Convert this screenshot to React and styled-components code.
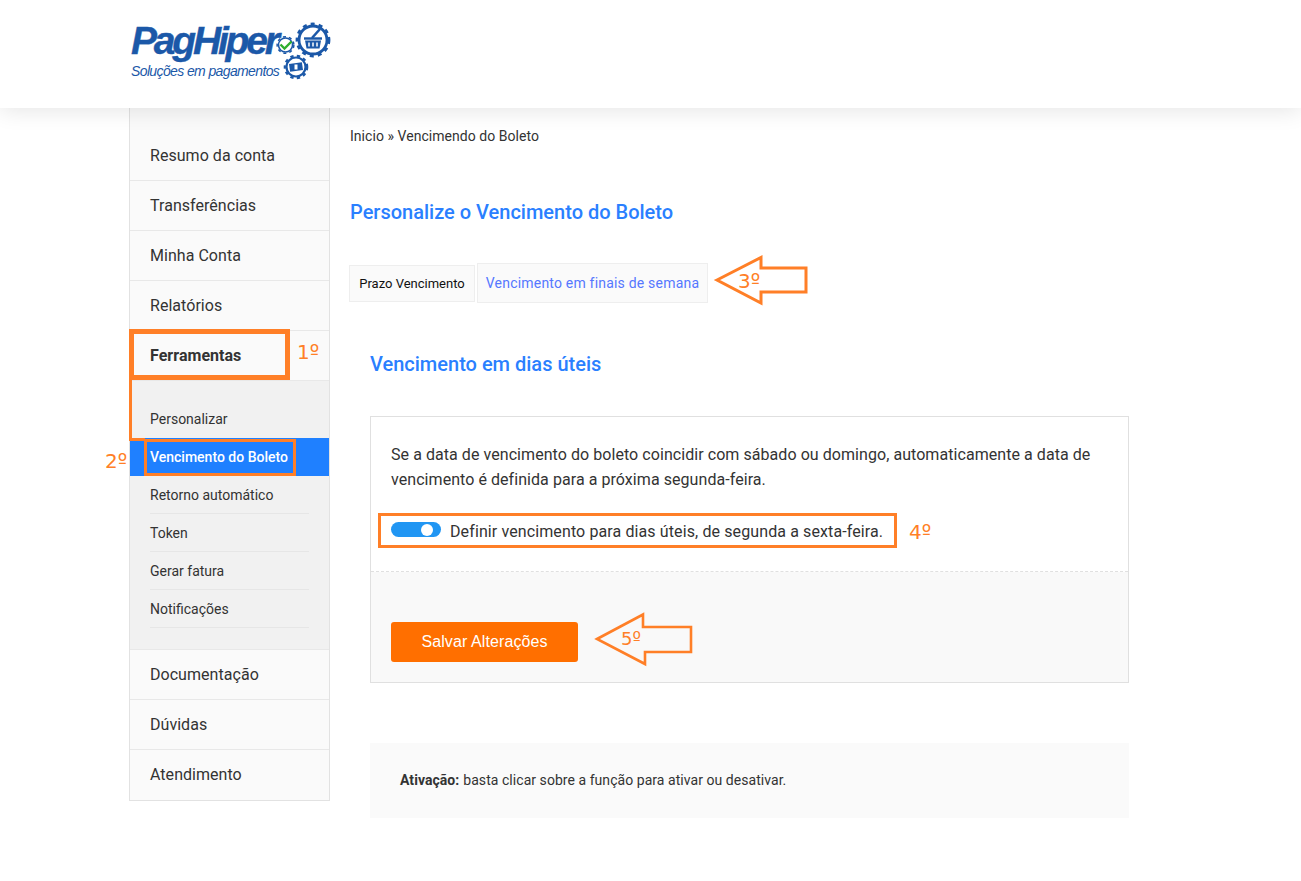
import React from "react";
import styled, { createGlobalStyle } from "styled-components";

const Global = createGlobalStyle`
  html, body { margin: 0; padding: 0; background: #fff; }
  body { font-family: Roboto, "Liberation Sans", sans-serif; color: #333; }
  * { box-sizing: border-box; }
`;

const Page = styled.div`
  position: relative;
  width: 1301px;
  height: 881px;
  overflow: hidden;
`;
const Header = styled.header`
  position: relative;
  z-index: 2;
  height: 108px;
  padding: 19px 0 0 131px;
  background: #fff;
  box-shadow: 0 2px 22px rgba(0, 0, 0, 0.11);
`;
const Logo = styled.div`
  display: flex;
  align-items: flex-start;
  color: #1b58a8;
`;
const LogoWords = styled.div`
  width: 144px;
  display: flex;
  flex-direction: column;
`;
const LogoName = styled.span`
  font: italic 700 39px/44px "Liberation Sans", sans-serif;
  letter-spacing: -3.2px;
  white-space: nowrap;
  -webkit-text-stroke: 0.4px #1b58a8;
`;
const LogoTag = styled.span`
  font: italic 400 14px/16px "Liberation Sans", sans-serif;
  letter-spacing: -0.62px;
  white-space: nowrap;
`;
const LogoMark = styled.svg`
  width: 57px;
  height: 60px;
  margin-top: 1px;
`;
const Body = styled.div`
  display: grid;
  grid-template-columns: 201px 759px;
  margin-left: 129px;
`;
const Side = styled.nav`
  height: 693px;
  padding-top: 23px;
  background: #fafafa;
  border: 1px solid #e2e2e2;
  border-width: 0 1px 2px;
`;
const MainItem = styled.div`
  height: 50px;
  padding-left: 20px;
  display: flex;
  align-items: center;
  font-size: 16px;
  letter-spacing: 0.04px;
  font-weight: ${(p) => (p.$active ? 700 : 400)};
  color: #333;
  background: #fafafa;
  border-bottom: 1px solid ${(p) => (p.$last ? "transparent" : "#e8e8e8")};
`;
const SubMenu = styled.div`
  height: 269px;
  padding: 19px 0 21px;
  background: #f1f1f1;
  border-bottom: 1px solid #e8e8e8;
`;
const SubItem = styled.div`
  height: 38px;
  margin: ${(p) => (p.$current ? "0" : "0 20px")};
  padding-left: ${(p) => (p.$current ? "20px" : "0")};
  display: flex;
  align-items: center;
  font-size: 14px;
  font-weight: ${(p) => (p.$current ? 500 : 400)};
  color: ${(p) => (p.$current ? "#fff" : "#333")};
  background: ${(p) => (p.$current ? "#1f80ff" : "transparent")};
  border-bottom: ${(p) => (p.$line ? "1px solid #e6e6e6" : "none")};
`;
const Main = styled.main`
  padding-left: 20px;
`;
const Crumb = styled.div`
  margin-top: 19px;
  height: 18px;
  font-size: 14px;
  line-height: 18px;
  letter-spacing: 0.04px;
`;
const Title = styled.h1`
  margin: 55px 0 0;
  height: 24px;
  font-size: 20px;
  line-height: 24px;
  font-weight: 500;
  color: #2a7fff;
`;
const Tabs = styled.div`
  display: flex;
  align-items: center;
  gap: 2px;
  margin: 39px 0 0 -1px;
`;
const Tab = styled.div`
  display: flex;
  align-items: center;
  justify-content: center;
  width: ${(p) => p.$w}px;
  height: ${(p) => (p.$on ? 40 : 37)}px;
  font-size: ${(p) => (p.$on ? 14 : 13)}px;
  letter-spacing: ${(p) => (p.$on ? 0.2 : 0)}px;
  color: ${(p) => (p.$on ? "#5577ff" : "#111")};
  background: #fafafa;
  border: 1px solid #eeeeee;
`;
const SubTitle = styled.h2`
  margin: 49px 0 0 20px;
  height: 24px;
  font-size: 20px;
  line-height: 24px;
  font-weight: 500;
  color: #2a7fff;
`;
const Panel = styled.section`
  margin: 40px 0 0 20px;
  width: 759px;
  height: 267px;
  border: 1px solid #e0e0e0;
  display: flex;
  flex-direction: column;
`;
const PanelBody = styled.div`
  height: 155px;
  padding: 25px 20px 0;
  border-bottom: 1px dashed #e0e0e0;
`;
const Lead = styled.p`
  margin: 0;
  font-size: 16px;
  line-height: 25px;
  letter-spacing: 0.06px;
`;
const Option = styled.div`
  display: flex;
  align-items: center;
  gap: 9px;
  margin-top: 27px;
  height: 24px;
  font-size: 16px;
  letter-spacing: 0.11px;
  white-space: nowrap;
`;
const Toggle = styled.div`
  position: relative;
  width: 50px;
  height: 15px;
  margin-top: -3px;
  border-radius: 8px;
  background: #2196f3;
`;
const Knob = styled.div`
  position: absolute;
  right: 8px;
  top: 1.5px;
  width: 12px;
  height: 12px;
  border-radius: 50%;
  background: #fff;
`;
const PanelFoot = styled.div`
  flex: 1;
  padding: 50px 20px 0;
  background: #f9f9f9;
`;
const SaveButton = styled.button`
  width: 187px;
  height: 40px;
  border: 0;
  border-radius: 3px;
  background: #ff6f00;
  color: #fff;
  font: 400 16px "Liberation Sans", sans-serif;
  letter-spacing: 0.1px;
`;
const Note = styled.div`
  margin: 60px 0 0 20px;
  width: 759px;
  height: 75px;
  padding: 0 0 2px 30px;
  display: flex;
  align-items: center;
  gap: 4px;
  background: #fafafa;
  font-size: 14px;
  letter-spacing: 0.05px;
`;
const Strong = styled.b`
  font-weight: 700;
`;

/* Hand-drawn tutorial marks that lie over the page */
const Box = styled.div`
  position: absolute;
  z-index: 3;
  left: ${(p) => p.$x}px;
  top: ${(p) => p.$y}px;
  width: ${(p) => p.$w}px;
  height: ${(p) => p.$h}px;
  border: ${(p) => p.$t}px solid #ff7f27;
  ${(p) => (p.$open ? "border-top: 0; border-right: 0;" : "")}
`;
const Mark = styled.span`
  position: absolute;
  z-index: 4;
  left: ${(p) => p.$x}px;
  top: ${(p) => p.$y}px;
  font: 400 ${(p) => p.$s || 20}px/24px "DejaVu Sans", sans-serif;
  color: #ff7f27;
`;
const Arrow = styled.svg`
  position: absolute;
  z-index: 3;
  left: 0;
  top: 0;
  width: 1301px;
  height: 881px;
  pointer-events: none;
`;

function Gear({ cx, cy, r, teeth, w }) {
  const c = 2 * Math.PI * (r + w / 2);
  const d = c / teeth / 2;
  return (
    <g fill="none" stroke="#1b58a8">
      <circle cx={cx} cy={cy} r={r} strokeWidth={w} />
      <circle cx={cx} cy={cy} r={r + w / 2 + 0.6} strokeWidth={w} strokeDasharray={`${d} ${d}`} />
    </g>
  );
}

const main1 = ["Resumo da conta", "Transferências", "Minha Conta", "Relatórios"];
const subs = ["Personalizar", "Vencimento do Boleto", "Retorno automático", "Token", "Gerar fatura", "Notificações"];

export default function App() {
  return (
    <Page>
      <Global />
      <Header>
        <Logo>
          <LogoWords>
            <LogoName>PagHiper</LogoName>
            <LogoTag>Soluções em pagamentos</LogoTag>
          </LogoWords>
          <LogoMark viewBox="275 20 57 60">
            <Gear cx={313} cy={40} r={14} teeth={12} w={2.8} />
            <path d="M304 38.500H322" stroke="#1b58a8" strokeWidth="2.400" />
            <path d="M305 40.500h16l-1.500 8h-13z" fill="#1b58a8" />
            <path d="M309 42.500v4M313 42.500v4M317 42.500v4" stroke="#fff" strokeWidth="1.500" />
            <path d="M312 38l8-9" stroke="#1b58a8" strokeWidth="2.600" />
            <Gear cx={285.500} cy={45} r={7} teeth={8} w={1.500} />
            <path d="M280.500 44.500l4 4 7-7" fill="none" stroke="#2fae2f" strokeWidth="2.400" />
            <Gear cx={296} cy={67} r={9.500} teeth={10} w={2.200} />
            <rect x="289.500" y="63" width="13" height="8" transform="rotate(-8 296 67)" fill="#1b58a8" />
            <rect x="294.500" y="64.500" width="3" height="5" fill="#fff" />
          </LogoMark>
        </Logo>
      </Header>

      <Body>
        <Side>
          {main1.map((t) => (
            <MainItem key={t}>{t}</MainItem>
          ))}
          <MainItem $active>Ferramentas</MainItem>
          <SubMenu>
            {subs.map((t, i) => (
              <SubItem key={t} $current={i === 1} $line={i > 1}>
                {t}
              </SubItem>
            ))}
          </SubMenu>
          <MainItem>Documentação</MainItem>
          <MainItem>Dúvidas</MainItem>
          <MainItem $last>Atendimento</MainItem>
        </Side>

        <Main>
          <Crumb>Inicio » Vencimendo do Boleto</Crumb>
          <Title>Personalize o Vencimento do Boleto</Title>
          <Tabs>
            <Tab $w={126}>Prazo Vencimento</Tab>
            <Tab $w={231} $on>
              Vencimento em finais de semana
            </Tab>
          </Tabs>
          <SubTitle>Vencimento em dias úteis</SubTitle>
          <Panel>
            <PanelBody>
              <Lead>
                Se a data de vencimento do boleto coincidir com sábado ou domingo, automaticamente a data de
                vencimento é definida para a próxima segunda-feira.
              </Lead>
              <Option>
                <Toggle>
                  <Knob />
                </Toggle>
                Definir vencimento para dias úteis, de segunda a sexta-feira.
              </Option>
            </PanelBody>
            <PanelFoot>
              <SaveButton>Salvar Alterações</SaveButton>
            </PanelFoot>
          </Panel>
          <Note>
            <Strong>Ativação:</Strong> basta clicar sobre a função para ativar ou desativar.
          </Note>
        </Main>
      </Body>

      <Box $x={129} $y={329} $w={161} $h={51} $t={5} />
      <Box $x={129} $y={380} $w={16} $h={61} $t={3} $open />
      <Box $x={144} $y={439} $w={152} $h={37} $t={3} />
      <Box $x={378} $y={513} $w={519} $h={35} $t={3} />
      <Arrow viewBox="0 0 1301 881">
        <g fill="none" stroke="#ff7f27">
          <path strokeWidth="3" d="M717 280L761 257.500V268H806V292H761V303z" />
          <path strokeWidth="2.600" d="M597 639L643 614.500V627H691V652H645V664z" />
        </g>
      </Arrow>
      <Mark $x={297} $y={340}>1º</Mark>
      <Mark $x={105} $y={449}>2º</Mark>
      <Mark $x={738} $y={269}>3º</Mark>
      <Mark $x={909} $y={520}>4º</Mark>
      <Mark $x={621} $y={627} $s={18}>5º</Mark>
    </Page>
  );
}
